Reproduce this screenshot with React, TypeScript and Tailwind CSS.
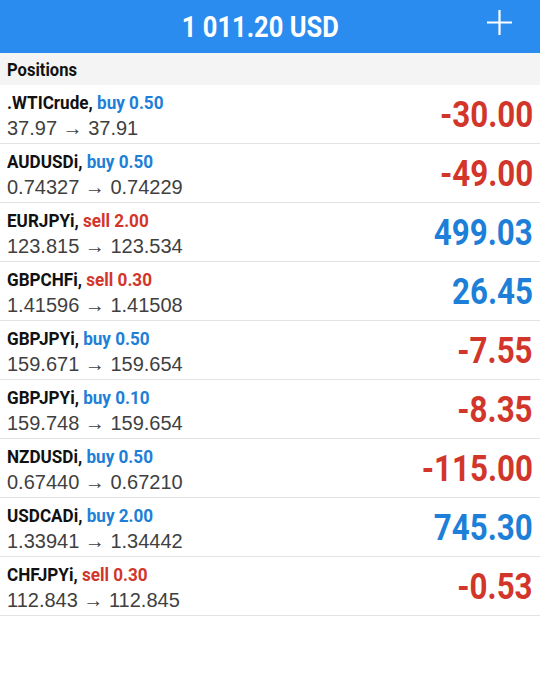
import React from 'react';

type Pos = { sym: string; side: 'buy' | 'sell'; vol: string; open: string; cur: string; pl: string };

const positions: Pos[] = [
  { sym: '.WTICrude', side: 'buy', vol: '0.50', open: '37.97', cur: '37.91', pl: '-30.00' },
  { sym: 'AUDUSDi', side: 'buy', vol: '0.50', open: '0.74327', cur: '0.74229', pl: '-49.00' },
  { sym: 'EURJPYi', side: 'sell', vol: '2.00', open: '123.815', cur: '123.534', pl: '499.03' },
  { sym: 'GBPCHFi', side: 'sell', vol: '0.30', open: '1.41596', cur: '1.41508', pl: '26.45' },
  { sym: 'GBPJPYi', side: 'buy', vol: '0.50', open: '159.671', cur: '159.654', pl: '-7.55' },
  { sym: 'GBPJPYi', side: 'buy', vol: '0.10', open: '159.748', cur: '159.654', pl: '-8.35' },
  { sym: 'NZDUSDi', side: 'buy', vol: '0.50', open: '0.67440', cur: '0.67210', pl: '-115.00' },
  { sym: 'USDCADi', side: 'buy', vol: '2.00', open: '1.33941', cur: '1.34442', pl: '745.30' },
  { sym: 'CHFJPYi', side: 'sell', vol: '0.30', open: '112.843', cur: '112.845', pl: '-0.53' },
];

const roboto = { fontFamily: 'Roboto, "Liberation Sans", sans-serif' };

export default function App() {
  return (
    <div className="w-[540px] h-[675px] bg-white overflow-hidden" style={{ fontFamily: '"Liberation Sans", Arial, sans-serif' }}>
      <div className="h-[53px] bg-[#2b8cf0] flex items-center justify-center relative">
        <span className="inline-block mr-[20px] scale-x-[0.85] text-white text-[30px] font-bold" style={roboto}>
          1 011.20 USD
        </span>
        <svg className="absolute right-[28px] top-[10px]" width="25" height="25" viewBox="0 0 25 25">
          <path d="M12.5 0v25M0 12.5h25" stroke="white" strokeWidth="2.2" />
        </svg>
      </div>
      <div className="h-[32px] bg-[#f4f4f4] flex items-center px-[7px]">
        <span className="inline-block origin-left scale-x-[0.92] text-[18px] font-bold text-[#111]" style={roboto}>Positions</span>
      </div>
      {positions.map((p, i) => {
        const neg = p.pl.startsWith('-');
        return (
          <div key={i} className="h-[59px] border-b border-[#e2e2e2] flex items-center justify-between px-[7px]">
            <div className="flex flex-col mt-[3px]">
              <div className="inline-block origin-left scale-x-[0.95] whitespace-nowrap text-[18px] font-bold leading-[25px] text-[#111]" style={roboto}>
                {p.sym},{' '}
                <span className={p.side === 'buy' ? 'text-[#1d7fd8]' : 'text-[#d2362b]'}>
                  {p.side} {p.vol}
                </span>
              </div>
              <div className="text-[20px] leading-[26px] text-[#3f3f3f]">
                {p.open} → {p.cur}
              </div>
            </div>
            <span
              className={`inline-block origin-right scale-x-[0.87] text-[36px] font-bold mt-[2px] ${neg ? 'text-[#d2362b]' : 'text-[#1d7fd8]'}`}
              style={roboto}
            >
              {p.pl}
            </span>
          </div>
        );
      })}
    </div>
  );
}
